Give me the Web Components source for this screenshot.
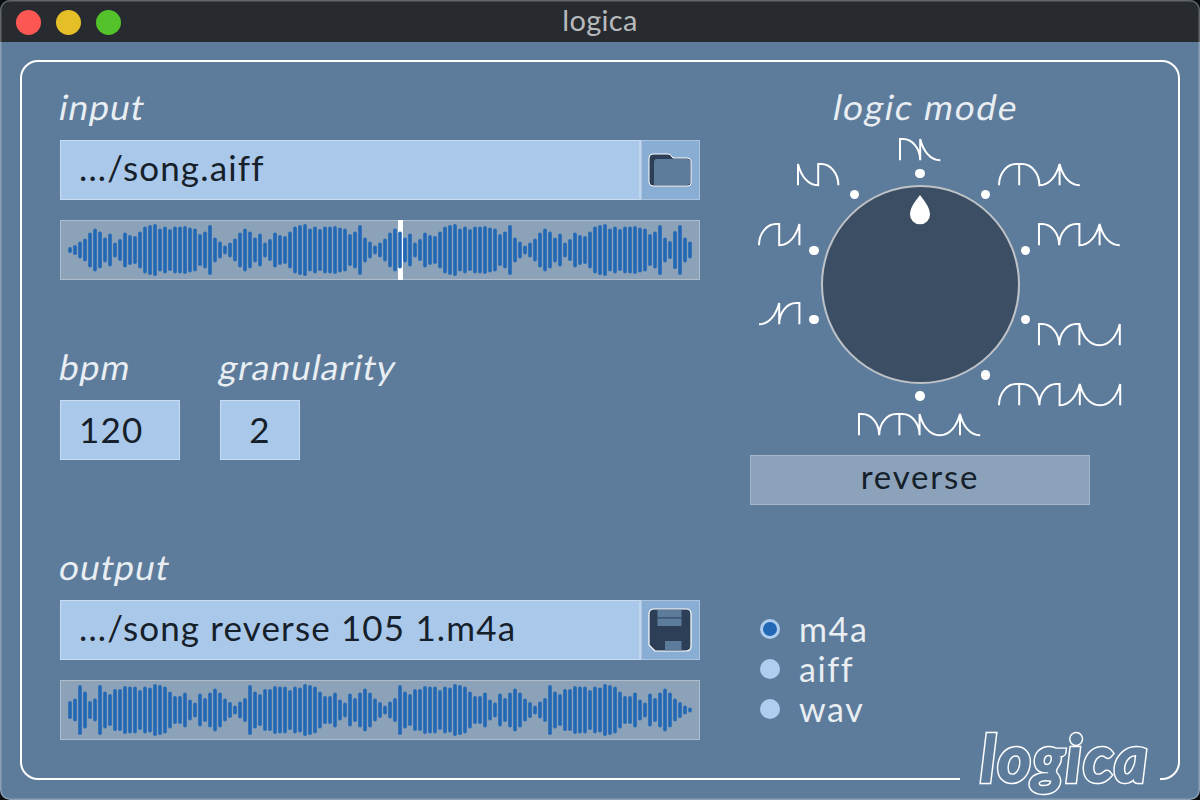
<!DOCTYPE html>
<html>
<head>
<meta charset="utf-8">
<title>logica</title>
<style>
  html, body { margin: 0; height: 100%; background: #0c0d0e; }
  body { font-family: Lato, "Open Sans", sans-serif; }
</style>
</head>
<body>

<app-window heading="logica">
  <main-panel>
    <section-label>input</section-label>
    <path-field value=".../song.aiff">
      <svg slot="icon" width="44" height="34" viewBox="0 0 44 34">
        <path d="M1 5 Q1 1 5 1 H20 Q23 1 24 4 L25 5 H39 Q43 5 43 8 V30 Q43 33 40 33 H5 Q1 33 1 29 Z" fill="#2c3f56" stroke="#fff" stroke-width="1"/>
        <path d="M6 9 Q6 6 9 6 H39 Q42 6 42 9 V29 Q42 32 39 32 H6 Z" fill="#5d7c9c"/>
      </svg>
    </path-field>
    <wave-strip id="wave-in"><play-head></play-head></wave-strip>

    <number-row>
      <number-field label="bpm" value="120" width="120"></number-field>
      <number-field label="granularity" value="2" width="80" center></number-field>
    </number-row>

    <section-label class="output">output</section-label>
    <path-field value=".../song reverse 105 1.m4a">
      <svg slot="icon" width="44" height="44" viewBox="0 0 44 44">
        <path d="M6 1 H38 Q43 1 43 6 V38 Q43 43 38 43 H7 L1 37 V6 Q1 1 6 1 Z" fill="#2c3f56" stroke="#fff" stroke-width="1.2"/>
        <rect x="9.5" y="2" width="24" height="16" fill="#5d7c9c"/>
        <rect x="9.5" y="9.4" width="24" height="1" fill="#2c3f56"/>
        <rect x="17" y="33" width="16.5" height="9.4" fill="#5d7c9c"/>
      </svg>
    </path-field>
    <wave-strip id="wave-out"></wave-strip>

    <logic-dial slot="side" mode="reverse"></logic-dial>
    <format-list slot="formats">
      <format-option selected>m4a</format-option>
      <format-option>aiff</format-option>
      <format-option>wav</format-option>
    </format-list>
    <logo-mark slot="logo" text="logica"></logo-mark>
  </main-panel>
</app-window>

<script>
// labels use the upright face sheared, the reference has an oblique with a double-storey a
const $LABEL = `
  font: 35px/40px Lato, sans-serif;
  letter-spacing: 1.1px;
  color: #e9eef3;
  white-space: nowrap;
`
const $SHEAR = `
  display: inline-block;
  transform: skewX(-11deg);
  position: relative;
  top: -2px;
`
const $VALUE = `
  color: #16202b;
  font: 35px/58px Lato, sans-serif;
  letter-spacing: 1.15px;
`

const WAVE_LOOP_IN  = [43,37,25,33,15,22,35,30,28,37,47,50,52,43,47,42,47,47,48,45,43,32,37,50,25,17,9,15,23,35]
const WAVE_LOOP_OUT = [50,37,32,42,42,48,47,47,40,47,45,52,50,47,37,28,28,35,21,15,33,24,35,43,35,23,16,9,17,24]

function waveIn() {
  const bars = [6,10,17,23,35]
  while (bars.length < 125) bars.push(WAVE_LOOP_IN[(bars.length - 5) % 30])
  // tail of the file doesn't follow the loop
  bars.splice(119, 6, 25,18,38,50,25,17)
  return bars
}

function waveOut() {
  const bars = [18,23,50,37,18,23]
  while (bars.length < 125) bars.push(WAVE_LOOP_OUT[(bars.length - 6) % 30])
  bars[124] = 5
  return bars
}

class AppWindow extends HTMLElement {
  constructor() {
    super()
    this.attachShadow({ mode: 'open' }).innerHTML = `
      <style>
        :host {
          display: flex;
          flex-direction: column;
          height: 800px;
          overflow: hidden;
          border-radius: 10px;
          background: #5d7c9c;
          position: relative;
        }
        :host::after {
          content: '';
          position: absolute;
          inset: 0;
          border-radius: 10px;
          box-shadow: inset 0 0 0 1.5px rgba(255,255,255,.28);
          pointer-events: none;
        }
        header {
          flex: 0 0 42px;
          box-sizing: border-box;
          padding-bottom: 3px;
          display: flex;
          align-items: center;
          justify-content: center;
          position: relative;
          background: #272b30;
          color: #b7babd;
          font: 29px Lato, sans-serif;
          letter-spacing: .3px;
        }
        .lights {
          position: absolute;
          left: 16px;
          top: 10px;
          display: flex;
          gap: 15px;
        }
        .lights i { width: 25px; height: 25px; border-radius: 50%; }
        .body { flex: 1; padding: 18px 20px 20px; display: flex; min-height: 0; }
      </style>
      <header>
        <div class="lights">
          <i style="background:#fd5754"></i>
          <i style="background:#e5bf28"></i>
          <i style="background:#53c22b"></i>
        </div>
        ${this.getAttribute('heading')}
      </header>
      <div class="body"><slot></slot></div>
    `
  }
}

class MainPanel extends HTMLElement {
  constructor() {
    super()
    this.attachShadow({ mode: 'open' }).innerHTML = `
      <style>
        :host {
          flex: 1;
          display: grid;
          grid-template-columns: 640px 1fr;
          column-gap: 50px;
          box-sizing: border-box;
          padding: 26px 0 0 38px;
          border: 2px solid #fff;
          border-radius: 18px;
          position: relative;
        }
        .left { display: flex; flex-direction: column; }
        .right { display: flex; flex-direction: column; min-width: 0; }
        .formats { margin-top: 104px; }
        ::slotted([slot=logo]) { position: absolute; right: 18px; bottom: -14px; }
      </style>
      <div class="left"><slot></slot></div>
      <div class="right">
        <slot name="side"></slot>
        <div class="formats"><slot name="formats"></slot></div>
      </div>
      <slot name="logo"></slot>
    `
  }
}

class SectionLabel extends HTMLElement {
  constructor() {
    super()
    this.attachShadow({ mode: 'open' }).innerHTML = `
      <style>
        :host {
          display: block;
          height: 40px;
          margin-bottom: 12px;
          ${$LABEL}
        }
        :host(.output) { margin-top: 88px; }
        span { ${$SHEAR} }
      </style>
      <span><slot></slot></span>
    `
  }
}

class PathField extends HTMLElement {
  constructor() {
    super()
    this.attachShadow({ mode: 'open' }).innerHTML = `
      <style>
        :host {
          display: flex;
          height: 60px;
          box-sizing: border-box;
          background: #aac9ea;
          box-shadow: inset 0 0 0 1px #c7dcf2;
          ${$VALUE}
          line-height: 55px;
        }
        .value { flex: 1; padding-left: 19px; }
        .pick {
          flex: 0 0 61px;
          display: flex;
          align-items: center;
          justify-content: center;
          padding-right: 1px;
          box-sizing: border-box;
          background: #8aadd3;
          border-left: 2px solid #c0d6ee;
          box-shadow: inset 0 0 0 1px #a9c3e0;
        }
      </style>
      <div class="value">${this.getAttribute('value')}</div>
      <div class="pick"><slot name="icon"></slot></div>
    `
  }
}

class WaveStrip extends HTMLElement {
  constructor() {
    super()
    const bars = this.id === 'wave-in' ? waveIn() : waveOut()
    const rects = bars.map((h, i) => {
      return `<rect x="${8.2 + i * 5}" y="${30 - h / 2}" width="3.6" height="${h}" rx="1.8"/>`
    }).join('')
    this.attachShadow({ mode: 'open' }).innerHTML = `
      <style>
        :host {
          display: block;
          position: relative;
          height: 60px;
          margin-top: 20px;
          background: #8ca2b9;
          box-shadow: inset 0 0 0 1px #aebccb;
        }
        svg { position: absolute; inset: 0; fill: #2268b5; }
      </style>
      <slot></slot>
      <svg width="640" height="60" viewBox="0 0 640 60">${rects}</svg>
    `
  }
}

class PlayHead extends HTMLElement {
  constructor() {
    super()
    this.attachShadow({ mode: 'open' }).innerHTML = `
      <style>
        :host {
          position: absolute;
          left: 337.5px;
          top: 0;
          bottom: 0;
          width: 5px;
          background: #fff;
        }
      </style>
    `
  }
}

class NumberRow extends HTMLElement {
  constructor() {
    super()
    this.attachShadow({ mode: 'open' }).innerHTML = `
      <style>
        :host { display: flex; gap: 40px; margin-top: 68px; }
      </style>
      <slot></slot>
    `
  }
}

class NumberField extends HTMLElement {
  constructor() {
    super()
    const align = this.hasAttribute('center') ? 'center' : 'left'
    this.attachShadow({ mode: 'open' }).innerHTML = `
      <style>
        :host { display: block; width: ${this.getAttribute('width')}px; }
        .label {
          height: 40px;
          margin-bottom: 12px;
          ${$LABEL}
        }
        .label span { ${$SHEAR} }
        .box {
          height: 60px;
          padding: 0 19px;
          box-sizing: border-box;
          background: #aac9ea;
          box-shadow: inset 0 0 0 1px #c7dcf2;
          ${$VALUE}
          text-align: ${align};
        }
      </style>
      <div class="label"><span>${this.getAttribute('label')}</span></div>
      <div class="box">${this.getAttribute('value')}</div>
    `
  }
}

// wave glyphs are built from four segments, 20px wide each
const SEG_W = 20.2
const SEG_H = 21.3
const SEGS = {
  a: x => `H${x + 3} C${x + 12} 0 ${x + SEG_W} 9 ${x + SEG_W} ${SEG_H}`,
  b: x => `C${x + 3} 12 ${x + 10} ${SEG_H} ${x + SEG_W} ${SEG_H}`,
  c: x => `C${x} 9 ${x + 8} 0 ${x + 17} 0 H${x + SEG_W}`,
  d: x => `C${x + 10} ${SEG_H} ${x + 17} 12 ${x + SEG_W} 0`
}

function segPath(cells) {
  let d = ''
  cells.split('').forEach((c, i) => {
    const x = 1 + i * SEG_W
    const startsTop = c === 'a' || c === 'b'
    const prev = cells[i - 1]
    const prevTop = prev === 'c' || prev === 'd'
    if (i === 0) d += `M${x} ${SEG_H} `
    if (startsTop) {
      if (prevTop) d += `V${SEG_H} `
      d += `V0 `
    } else if (prevTop) {
      d += `V${SEG_H} `
    }
    d += SEGS[c](x) + ' '
  })
  const last = cells[cells.length - 1]
  if (last === 'c' || last === 'd') d += `V${SEG_H}`
  return d
}

const DIAL_GLYPHS = [
  ['ab',     149.7,   9.3],
  ['ba',      48.3,  34.3],
  ['cd',       9.3,  94.3],
  ['dc',       9.3, 172.7],
  ['cadb',   249.3,  34.3],
  ['acdb',   289.3,  94.3],
  ['acbd',   289.3, 194.3],
  ['cacdbd', 249.3, 254.3],
  ['acabdb', 109.3, 284.3]
]

const DIAL_DOTS = [
  [64, 189.3], [64, 120.3], [104.3, 64.3], [170, 43.3], [235.7, 64.3],
  [275.7, 120.3], [275.7, 189.3], [235.7, 245], [170, 266]
]

class LogicDial extends HTMLElement {
  constructor() {
    super()
    const glyphs = DIAL_GLYPHS.map(([cells, x, y]) => {
      const w = cells.length * SEG_W + 2
      return `<svg class="glyph" style="left:${x - 1}px;top:${y - 1}px" width="${w}" height="${SEG_H + 2}" viewBox="0 -1 ${w} ${SEG_H + 2}"><path d="${segPath(cells)}"/></svg>`
    }).join('')
    const dots = DIAL_DOTS.map(([x, y]) => `<i class="dot" style="left:${x - 4.7}px;top:${y - 4.7}px"></i>`).join('')
    this.attachShadow({ mode: 'open' }).innerHTML = `
      <style>
        :host { display: block; width: 380px; }
        .title {
          width: 340px;
          height: 40px;
          margin-bottom: 2px;
          box-sizing: border-box;
          padding-left: 14px;
          text-align: center;
          ${$LABEL}
          letter-spacing: 1.8px;
        }
        .title span { ${$SHEAR} }
        .canvas { position: relative; height: 325px; }
        .glyph { position: absolute; fill: none; stroke: #fff; stroke-width: 2; overflow: visible; }
        .dot { position: absolute; width: 9.4px; height: 9.4px; border-radius: 50%; background: #fff; }
        .knob {
          position: absolute;
          left: 70.5px;
          top: 55px;
          width: 199px;
          height: 199px;
          box-sizing: border-box;
          border-radius: 50%;
          background: #3c4e63;
          border: 2.8px solid #bfc3c8;
          display: flex;
          justify-content: center;
          padding-top: 8.2px;
        }
        .knob svg { display: block; }
        .mode {
          width: 340px;
          height: 50px;
          box-sizing: border-box;
          background: #8ba2ba;
          box-shadow: inset 0 0 0 1px #a5b6c8;
          text-align: center;
          color: #16202b;
          font: 33px/43px Lato, sans-serif;
          letter-spacing: 1.8px;
        }
      </style>
      <div class="title"><span>logic mode</span></div>
      <div class="canvas">
        ${dots}
        ${glyphs}
        <div class="knob">
          <svg width="20" height="30" viewBox="0 0 20 30"><path d="M10 0 C13 4 20 12 20 19.5 A10 9.8 0 0 1 0 19.5 C0 12 7 4 10 0 Z" fill="#fff"/></svg>
        </div>
      </div>
      <div class="mode">${this.getAttribute('mode')}</div>
    `
  }
}

class FormatList extends HTMLElement {
  constructor() {
    super()
    this.attachShadow({ mode: 'open' }).innerHTML = `
      <style>
        :host { display: flex; flex-direction: column; padding-left: 10px; }
      </style>
      <slot></slot>
    `
  }
}

class FormatOption extends HTMLElement {
  constructor() {
    super()
    this.attachShadow({ mode: 'open' }).innerHTML = `
      <style>
        :host {
          display: flex;
          align-items: center;
          gap: 19px;
          height: 40px;
          color: #e9eef3;
          font: 34px/38px Lato, sans-serif;
          letter-spacing: 1.6px;
        }
        i {
          width: 20px;
          height: 20px;
          box-sizing: border-box;
          border-radius: 50%;
          background: #afcdee;
        }
        :host([selected]) i { background: #2268b5; border: 3px solid #afcdee; }
      </style>
      <i></i><span><slot></slot></span>
    `
  }
}

class LogoMark extends HTMLElement {
  constructor() {
    super()
    const text = this.getAttribute('text')
    this.attachShadow({ mode: 'open' }).innerHTML = `
      <style>
        :host {
          display: block;
          box-sizing: border-box;
          width: 200px;
          height: 60px;
          background: #5d7c9c;
        }
        .word {
          position: relative;
          display: block;
          padding-left: 21px;
          font: italic 400 62px/50px Lato, sans-serif;
          letter-spacing: 3.2px;
          color: #fff;
          -webkit-text-stroke: 6.5px #fff;
        }
        /* inner layer knocks the middle out of the fat stroke, leaves an outline */
        .word::after {
          content: attr(data-text);
          position: absolute;
          left: 21px;
          top: 0;
          color: #5d7c9c;
          -webkit-text-stroke: 3.6px #5d7c9c;
        }
      </style>
      <span class="word" data-text="${text}">${text}</span>
    `
  }
}

customElements.define('app-window', AppWindow)
customElements.define('main-panel', MainPanel)
customElements.define('section-label', SectionLabel)
customElements.define('path-field', PathField)
customElements.define('wave-strip', WaveStrip)
customElements.define('play-head', PlayHead)
customElements.define('number-row', NumberRow)
customElements.define('number-field', NumberField)
customElements.define('logic-dial', LogicDial)
customElements.define('format-list', FormatList)
customElements.define('format-option', FormatOption)
customElements.define('logo-mark', LogoMark)
</script>
</body>
</html>
